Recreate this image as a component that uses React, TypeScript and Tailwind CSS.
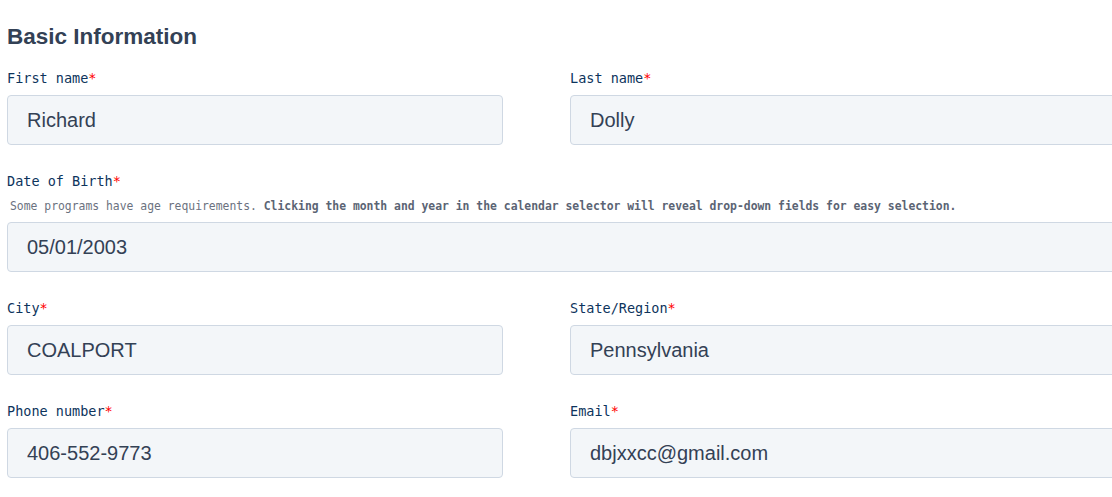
import React from "react";

const mono = "font-['DejaVu_Sans_Mono','Liberation_Mono',monospace]";

const Label = ({ text }: { text: string }) => (
  <label className={`block text-[13.5px] leading-5 text-[#0d345c] ${mono}`}>
    {text}
    <span className="text-[#ff0000]">*</span>
  </label>
);

const Input = ({ value }: { value: string }) => (
  <input
    readOnly
    value={value}
    className="block w-full h-[50px] rounded-[4px] border border-[#cfd8e3] bg-[#f3f6f9] pl-[19px] text-[20px] text-[#334155] font-['Liberation_Sans',Arial,sans-serif] outline-none"
  />
);

const Field = ({ label, value }: { label: string; value: string }) => (
  <div className="mb-[26px]">
    <Label text={label} />
    <div className="mt-[7px]">
      <Input value={value} />
    </div>
  </div>
);

export default function App() {
  return (
    <div className="w-[1112px] h-[497px] overflow-hidden bg-white">
      <div className="w-[1230px] pl-[7px] pt-[21px]">
        <h2 className="text-[22.5px] leading-[31px] font-bold text-[#334155] font-['Liberation_Sans',Arial,sans-serif] mb-[16px]">
          Basic Information
        </h2>
        <div className="grid grid-cols-[496px_1fr] gap-x-[67px]">
          <Field label="First name" value="Richard" />
          <Field label="Last name" value="Dolly" />
          <div className="col-span-2 mb-[26px]">
            <Label text="Date of Birth" />
            <p className={`mt-[7px] mb-[8px] pl-[3px] text-[11.4px] leading-4 text-[#6b7280] ${mono}`}>
              Some programs have age requirements.{" "}
              <span className="font-bold text-[#5b6474]">
                Clicking the month and year in the calendar selector will reveal drop-down fields for easy selection.
              </span>
            </p>
            <Input value="05/01/2003" />
          </div>
          <Field label="City" value="COALPORT" />
          <Field label="State/Region" value="Pennsylvania" />
          <Field label="Phone number" value="406-552-9773" />
          <Field label="Email" value="dbjxxcc@gmail.com" />
        </div>
      </div>
    </div>
  );
}
